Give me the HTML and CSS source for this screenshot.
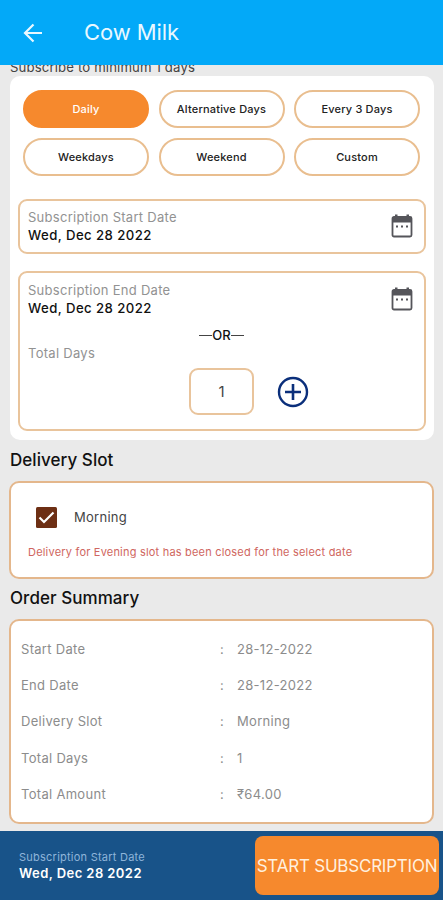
FILE: index.html
```
<!DOCTYPE html>
<html lang="en">
<head>
<meta charset="utf-8">
<title>Cow Milk</title>
<link rel="stylesheet" href="styles.css">
</head>
<body>
<div class="app">
  <header class="bar">
    <svg class="back" width="20" height="20" viewBox="0 0 20 20"><path d="M19 10H2M10.500 1.500L2 10l8.500 8.500" fill="none" stroke="#e9f8ff" stroke-width="2.200"/></svg>
    <h1 class="title">Cow Milk</h1>
  </header>
  <main class="content">
    <p class="hint"><span>Subscribe to minimum 1 days</span></p>
    <section class="card">
      <div class="pills">
        <button class="pill active"><span>Daily</span></button>
        <button class="pill"><span>Alternative Days</span></button>
        <button class="pill"><span>Every 3 Days</span></button>
        <button class="pill"><span>Weekdays</span></button>
        <button class="pill"><span>Weekend</span></button>
        <button class="pill"><span>Custom</span></button>
      </div>
      <div class="box start">
        <div class="date-row">
          <div>
            <div class="label"><span>Subscription Start Date</span></div>
            <div class="date"><span>Wed, Dec 28 2022</span></div>
          </div>
          <svg class="cal" width="22" height="24" viewBox="0 0 22 24"><path d="M1.500 4.500a1.500 1.500 0 0 1 1.500-1.500h16a1.500 1.500 0 0 1 1.500 1.500v16.500a1.500 1.500 0 0 1-1.500 1.500H3a1.500 1.500 0 0 1-1.500-1.500z" fill="none" stroke="#55555a" stroke-width="1.800"/><path d="M1.500 3h19v5.500h-19zM4 .5h2.500v3H4zM15.500.5H18v3h-2.500z" fill="#55555a"/><path d="M5 11.500h2v2H5zM10 11.500h2v2h-2zM15 11.500h2v2h-2z" fill="#55555a"/></svg>
        </div>
      </div>
      <div class="box end">
        <div class="date-row">
          <div>
            <div class="label"><span>Subscription End Date</span></div>
            <div class="date"><span>Wed, Dec 28 2022</span></div>
          </div>
          <svg class="cal" width="22" height="24" viewBox="0 0 22 24"><path d="M1.500 4.500a1.500 1.500 0 0 1 1.500-1.500h16a1.500 1.500 0 0 1 1.500 1.500v16.500a1.500 1.500 0 0 1-1.500 1.500H3a1.500 1.500 0 0 1-1.500-1.500z" fill="none" stroke="#55555a" stroke-width="1.800"/><path d="M1.500 3h19v5.500h-19zM4 .5h2.500v3H4zM15.500.5H18v3h-2.500z" fill="#55555a"/><path d="M5 11.500h2v2H5zM10 11.500h2v2h-2zM15 11.500h2v2h-2z" fill="#55555a"/></svg>
        </div>
        <div class="or"><i class="dash"></i><span>OR</span><i class="dash"></i></div>
        <div class="label"><span class="total">Total Days</span></div>
        <div class="stepper">
          <div class="count">1</div>
          <svg width="32" height="32" viewBox="0 0 32 32"><path d="M16 8v16M8 16h16" stroke="#0b2f7b" stroke-width="2.600"/><circle cx="16" cy="16" r="14" fill="none" stroke="#0b2f7b" stroke-width="2.400"/></svg>
        </div>
      </div>
    </section>
    <h2 class="heading slot-h"><span>Delivery Slot</span></h2>
    <section class="panel slot">
      <div class="check-row">
        <svg width="21" height="21" viewBox="0 0 21 21"><rect width="21" height="21" rx="1.500" fill="#6d2f14"/><path d="M3.500 10.500l4.500 4.500L17.500 5.500" fill="none" stroke="#fff" stroke-width="2.200"/></svg>
        <span class="morning">Morning</span>
      </div>
      <p class="warn"><span>Delivery for Evening slot has been closed for the select date</span></p>
    </section>
    <h2 class="heading sum-h"><span>Order Summary</span></h2>
    <section class="panel summary">
      <div class="row"><span class="k">Start Date</span><span class="c">:</span><span class="v">28-12-2022</span></div>
      <div class="row"><span class="k">End Date</span><span class="c">:</span><span class="v">28-12-2022</span></div>
      <div class="row"><span class="k">Delivery Slot</span><span class="c">:</span><span class="v">Morning</span></div>
      <div class="row"><span class="k">Total Days</span><span class="c">:</span><span class="v">1</span></div>
      <div class="row"><span class="k">Total Amount</span><span class="c">:</span><span class="v">₹64.00</span></div>
    </section>
  </main>
  <footer class="footer">
    <div class="foot-text">
      <div class="foot-label">Subscription Start Date</div>
      <div class="foot-date">Wed, Dec 28 2022</div>
    </div>
    <button class="cta"><span>START SUBSCRIPTION</span></button>
  </footer>
</div>
</body>
</html>
```
FILE: styles.css
```
* { box-sizing: border-box; margin: 0; padding: 0; }
body { font-family: Inter, "Liberation Sans", sans-serif; background: #eaeaea; color: #111; }
button { font-family: inherit; border: 0; }
.app { width: 443px; height: 900px; display: flex; flex-direction: column; overflow: hidden; }
.bar { height: 65px; flex: none; background: #03a9f8; display: flex; align-items: center; padding-left: 23px; }
.title { margin: -1px 0 0 41px; font-size: 22px; font-weight: 400; color: #e9f8ff; white-space: nowrap; letter-spacing: -0.1px; }
.content { flex: 1; min-height: 0; overflow: hidden; padding: 0 9px; }
.hint { height: 11px; padding-left: 1px; display: flex; align-items: flex-end; font-size: 13.2px; line-height: 18px; letter-spacing: 0.13px; color: #444; white-space: nowrap; }
.card { height: 364px; margin-left: 1px; background: #fff; border-radius: 10px; padding: 14px 8px 9px; }
.pills { display: grid; grid-template-columns: repeat(3, 126px); gap: 10px 9.500px; padding-left: 5px; }
.pill { height: 38px; border: 2px solid #e9be8f; border-radius: 19px; background: #fff; font-size: 11px; font-weight: 500; letter-spacing: 0.18px; color: #222; white-space: nowrap; }
.pill.active { background: #f6892d; border-color: #f6892d; color: #fff; }
.box { border: 2px solid #e9c49c; border-radius: 9px; padding: 7px 11px 0 8px; }
.start { height: 55px; margin-top: 23px; }
.end { height: 160px; margin-top: 17px; padding-top: 8px; }
.date-row { display: flex; justify-content: space-between; }
.label { height: 18px; font-size: 13px; line-height: 18px; letter-spacing: 0.28px; color: #929292; white-space: nowrap; }
.date { font-size: 13.200px; line-height: 18px; font-weight: 500; letter-spacing: 0.42px; color: #111; white-space: nowrap; }
.cal { margin-top: 6px; }
.or { height: 18px; margin-top: 9px; display: flex; align-items: center; justify-content: center; font-size: 13px; line-height: 18px; font-weight: 500; color: #111; padding-left: 2px; }
.dash { width: 13px; height: 1px; background: #444; }
.stepper { display: flex; align-items: center; gap: 23px; margin: 6px 0 0 161px; }
.count { width: 65px; height: 47px; border: 2px solid #e9c49c; border-radius: 9px; font-size: 15px; color: #444; display: flex; align-items: center; justify-content: center; }
.heading { font-weight: 500; font-size: 17px; line-height: 24px; color: #111; padding-left: 1px; letter-spacing: 0.05px; white-space: nowrap; }
.slot-h { margin-top: 8px; }
.sum-h { margin-top: 7px; }
.panel { background: #fff; border: 2px solid #e4b78c; border-radius: 10px; }
.slot { height: 98px; margin-top: 9px; padding: 24px 17px 0; }
.check-row { display: flex; align-items: center; padding-left: 8px; }
.morning { margin: -1px 0 0 17px; font-size: 13px; letter-spacing: 0.28px; color: #444; }
.warn { margin-top: 16px; font-size: 11px; line-height: 16px; letter-spacing: 0.2px; color: #cf6660; white-space: nowrap; }
.summary { height: 205px; margin-top: 9px; padding: 10px 10px 0; }
.row { height: 36.200px; display: grid; grid-template-columns: 199px 17px 1fr; align-items: center; font-size: 13px; letter-spacing: 0.3px; color: #8c8c8c; white-space: nowrap; }
.footer { height: 69px; flex: none; background: #185389; display: flex; justify-content: space-between; align-items: center; padding: 0 4px 0 19px; }
.foot-label { font-size: 11px; line-height: 14px; letter-spacing: 0.24px; color: #8fb5da; white-space: nowrap; }
.foot-date { font-size: 13px; line-height: 18px; font-weight: 600; letter-spacing: 0.43px; color: #fff; white-space: nowrap; }
.cta { width: 184px; height: 59px; background: #f6892d; border-radius: 8px; color: #fff0df; font-size: 17px; letter-spacing: -0.22px; white-space: nowrap; display: flex; align-items: center; justify-content: center; }
```
